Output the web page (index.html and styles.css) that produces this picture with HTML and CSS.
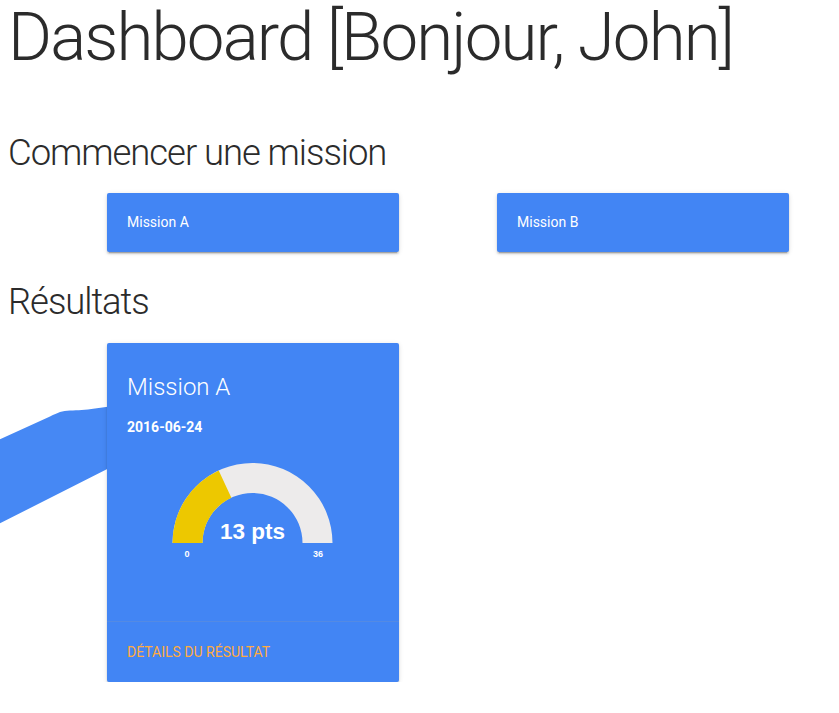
FILE: index.html
```html
<!DOCTYPE html>
<html lang="fr">
<head>
<meta charset="utf-8">
<title>Dashboard</title>
<link rel="stylesheet" href="styles.css">
</head>
<body>
<main class="page">
  <h1 class="page-title">Dashboard [Bonjour, John]</h1>

  <h4 class="section-title section-start">Commencer une mission</h4>
  <div class="card-row missions">
    <div class="card mission-card">Mission A</div>
    <div class="card mission-card">Mission B</div>
  </div>

  <h4 class="section-title section-results">Résultats</h4>
  <div class="card-row results">
    <svg class="swoosh" width="128" height="200" viewBox="0 0 128 200" aria-hidden="true">
      <path d="M0 96.3 L50 73.5 C58 69.5 62 67.7 70 67.5 C78 67.3 85 67.3 95 65.5 L128 61 L128 115.5 L0 180.3 Z" fill="#4688f4"/>
    </svg>
    <div class="card result-card">
      <div class="card-content">
        <span class="card-title">Mission A</span>
        <p class="result-date">2016-06-24</p>
        <svg class="gauge" width="252" height="163" viewBox="0 0 252 163">
          <path d="M45.5 105 A80 80 0 0 1 205.5 105 L175.5 105 A50 50 0 0 0 75.5 105 Z" fill="#edebeb"/>
          <path d="M45.5 105 A80 80 0 0 1 91.69 32.5 L104.37 59.68 A50 50 0 0 0 75.5 105 Z" fill="#edc800"/>
          <text class="gauge-value" x="125.5" y="101.3" text-anchor="middle">13 pts</text>
          <text class="gauge-label" x="60" y="118.7" text-anchor="middle">0</text>
          <text class="gauge-label" x="191" y="118.7" text-anchor="middle">36</text>
        </svg>
      </div>
      <div class="card-action">
        <a class="action-link" href="#">Détails du résultat</a>
      </div>
    </div>
  </div>
</main>
</body>
</html>
```
FILE: styles.css
```css
html, body {
  margin: 0;
  padding: 0;
  background: #ffffff;
}

body {
  font-family: Roboto, "Liberation Sans", Arial, sans-serif;
  color: rgba(0, 0, 0, 0.87);
}

.page {
  padding: 1px 8px 0;
}

.page-title {
  margin: 0;
  font-size: 67.2px;
  line-height: 73.92px;
  font-weight: 300;
  letter-spacing: -0.028em;
  color: #2b2b2b;
}

.section-title {
  margin: 0;
  font-size: 36.48px;
  line-height: 40.13px;
  font-weight: 300;
  letter-spacing: -0.029em;
  color: #2b2b2b;
}

.section-start {
  margin-top: 58.5px;
}

.section-results {
  margin-top: 30.5px;
}

.card-row {
  display: grid;
  grid-template-columns: 292px 292px;
  column-gap: 98px;
  padding-left: 99px;
  align-items: start;
}

.missions {
  margin-top: 19.4px;
}

.results {
  margin-top: 20.4px;
  position: relative;
}

.card {
  background: #4285f4;
  color: #ffffff;
  border-radius: 2px;
  box-shadow: 0 2px 2px 0 rgba(0, 0, 0, 0.14), 0 1px 5px 0 rgba(0, 0, 0, 0.12), 0 3px 1px -2px rgba(0, 0, 0, 0.2);
  position: relative;
}

.mission-card {
  padding: 20px;
  font-size: 14px;
  line-height: 19px;
}

.swoosh {
  position: absolute;
  left: -8px;
  top: 0;
}

.card-content {
  padding: 20px;
}

.card-title {
  display: block;
  font-size: 24px;
  line-height: 48px;
  font-weight: 300;
}

.result-date {
  margin: 6px 0 0;
  font-size: 14px;
  line-height: 21px;
  font-weight: 700;
}

.gauge {
  display: block;
}

.gauge-value {
  font-family: "Liberation Sans", Arial, sans-serif;
  font-size: 22.5px;
  font-weight: 700;
  fill: #ffffff;
}

.gauge-label {
  font-family: "Liberation Sans", Arial, sans-serif;
  font-size: 9px;
  font-weight: 700;
  fill: #ffffff;
}

.card-action {
  border-top: 1px solid rgba(160, 160, 160, 0.2);
  padding: 20px;
  line-height: 20px;
}

.action-link {
  color: #ffab40;
  text-decoration: none;
  text-transform: uppercase;
  font-size: 14px;
}
```
